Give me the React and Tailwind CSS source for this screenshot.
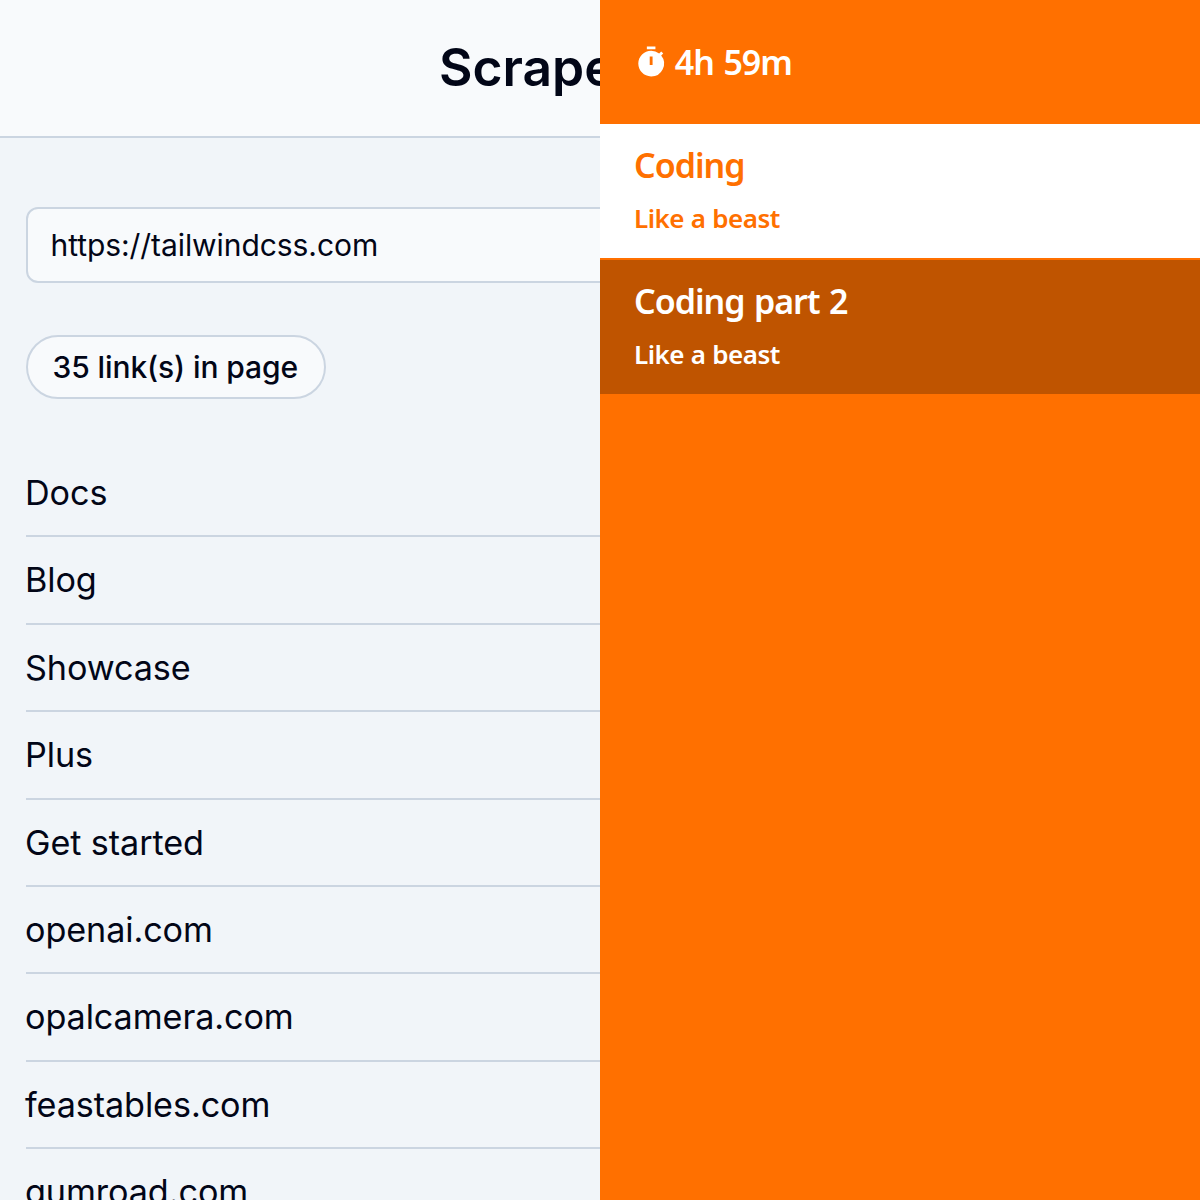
const links = ["Docs", "Blog", "Showcase", "Plus", "Get started", "openai.com", "opalcamera.com", "feastables.com", "gumroad.com"];

function Scraper() {
  return (
    <div className="w-[600px] h-full overflow-hidden bg-[#f1f5f9] font-['Inter',sans-serif] text-[#020617]">
      <header className="h-[138px] bg-[#f8fafc] border-b-2 border-[#cbd5e1] pl-[439px] pt-[33px] whitespace-nowrap overflow-hidden">
        <h1 className="text-[51.5px] leading-[68px] font-semibold">Scraper</h1>
      </header>
      <div className="pl-[26px] pt-[69px]">
        <div className="w-[700px] h-[76px] rounded-xl border-2 border-[#cbd5e1] bg-[#f8fafc] pl-[22.5px] text-[30px] leading-[72px] tracking-[-0.07px]">https://tailwindcss.com</div>
        <div className="mt-[52px] w-[300px] h-[64px] rounded-full border-2 border-[#cbd5e1] bg-[#f8fafc] pl-[24.5px] text-[30px] leading-[60px] font-medium whitespace-nowrap tracking-[-0.1px]">35 link(s) in page</div>
        <ul className="mt-[51px]">
          {links.map((l) => (
            <li key={l} className="h-[87.4px] border-b-2 border-[#cbd5e1] text-[34.2px] leading-[86.2px] -indent-px tracking-[-0.1px]">{l}</li>
          ))}
        </ul>
      </div>
    </div>
  );
}

function Task({ title, active }) {
  return (
    <div className={active ? "h-[136px] bg-[#bf5400] text-white border-t-2 border-[#ff7000] pl-[34px] pt-[18px]" : "h-[134px] bg-white text-[#ff7000] pl-[34px] pt-[18px]"}>
      <div className="text-[34px] leading-[46px] font-semibold tracking-[-1px] [word-spacing:1.5px]">{title}</div>
      <div className="mt-[12px] text-[26px] leading-[36px] font-semibold tracking-[-0.5px] [word-spacing:0.5px]">Like a beast</div>
    </div>
  );
}

export default function App() {
  return (
    <div className="flex w-[1200px] h-[1200px] overflow-hidden">
      <Scraper />
      <div className="w-[600px] h-full bg-[#ff7000] font-['Noto_Sans',sans-serif]">
        <div className="h-[124px] flex items-center pl-[34px] text-white">
          <svg className="w-[34.3px] h-[34.3px]" viewBox="0 0 24 24" fill="currentColor"><path d="M9 1h6v2H9zM19.03 7.39l1.42-1.42c-.43-.51-.9-.99-1.41-1.41l-1.42 1.42A8.962 8.962 0 0 0 12 4c-4.97 0-9 4.03-9 9s4.02 9 9 9a8.994 8.994 0 0 0 7.03-14.61zM13 14h-2V8h2v6z" /></svg>
          <span className="ml-[6.5px] text-[34px] font-semibold tracking-[-1.1px] [word-spacing:2px]">4h 59m</span>
        </div>
        <Task title="Coding" />
        <Task title="Coding part 2" active />
      </div>
    </div>
  );
}
